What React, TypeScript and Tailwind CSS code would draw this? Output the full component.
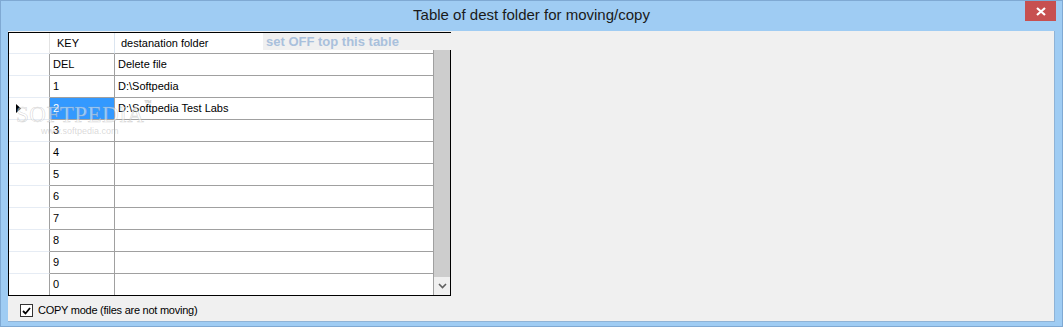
import React from "react";

const rows = ["DEL", "1", "2", "3", "4", "5", "6", "7", "8", "9", "0"];
const dest: Record<string, string> = { DEL: "Delete file", "1": "D:\\Softpedia", "2": "D:\\Softpedia Test Labs" };

export default function App() {
  return (
    <div className="w-[1063px] h-[327px] bg-[#9fccf3] border border-[#7fa9d3] flex flex-col relative overflow-hidden" style={{ fontFamily: '"Liberation Sans", Arial, sans-serif' }}>
      {/* title bar */}
      <div className="h-[30px] shrink-0 flex items-center justify-center relative">
        <span className="text-[15px] text-[#1a1a1a] pb-[1px]">Table of dest folder for moving/copy</span>
        <div className="absolute right-[6px] top-0 w-[31px] h-[20px] bg-[#c75050] flex items-center justify-center">
          <svg width="10" height="9" viewBox="0 0 10 9">
            <path d="M1 1 L9 8 M9 1 L1 8" stroke="#ffffff" strokeWidth="2.2" />
          </svg>
        </div>
      </div>
      {/* client */}
      <div className="ml-[7px] w-[1047px] h-[291px] bg-[#f0f0f0] border-r border-b border-[#8fb3d6] relative">
        {/* grid */}
        <div className="mt-[1px] w-[443px] h-[264px] border border-black bg-[#ffffff] flex relative">
          <div className="w-[425px] flex flex-col text-[11px] text-black">
            {/* header */}
            <div className="h-[21px] flex shrink-0">
              <div className="w-[41px] border-r border-[#e3e3e3] border-b border-b-[#e6ecf4]" />
              <div className="w-[65px] border-r border-[#dbe5f0] border-b border-b-[#a0a0a0] flex items-center pl-[7px]">KEY</div>
              <div className="w-[319px] border-r border-[#a0a0a0] border-b border-b-[#a0a0a0] flex items-center pl-[6px]">destanation folder</div>
            </div>
            {rows.map((k, i) => {
              const last = i === rows.length - 1;
              const sel = k === "2";
              return (
                <div key={k} className={`flex shrink-0 ${last ? "h-[21px]" : "h-[22px]"}`}>
                  <div className={`w-[41px] border-r border-[#a0a0a0] flex items-center pl-[7px] ${last ? "" : "border-b border-b-[#e6ecf4]"}`}>
                    {sel && (
                      <svg width="5" height="9" viewBox="0 0 5 9">
                        <path d="M0 0 L5 4.5 L0 9 Z" fill="#000" />
                      </svg>
                    )}
                  </div>
                  <div className={`w-[65px] border-r border-[#a0a0a0] flex items-center pl-[3px] ${last ? "" : "border-b border-b-[#a0a0a0]"} ${sel ? "bg-[#3399ff] text-white" : ""}`}>{k}</div>
                  <div className={`w-[319px] border-r border-[#a0a0a0] flex items-center pl-[3px] ${last ? "" : "border-b border-b-[#a0a0a0]"}`}>{dest[k] ?? ""}</div>
                </div>
              );
            })}
          </div>
          {/* scrollbar */}
          <div className="w-[16px] flex flex-col bg-[#f0f0f0]">
            <div className="h-[17px] shrink-0" />
            <div className="flex-1 bg-[#cdcdcd]" />
            <div className="h-[18px] shrink-0 flex items-center justify-center">
              <svg width="9" height="6" viewBox="0 0 9 6">
                <path d="M1 1 L4.5 4.5 L8 1" stroke="#606060" strokeWidth="1.6" fill="none" />
              </svg>
            </div>
          </div>
          {/* watermark overlay */}
          <div className="absolute left-[7px] top-[65px] text-[23px] tracking-[0.5px] text-[rgba(255,255,255,0.5)] pointer-events-none" style={{ fontFamily: '"Liberation Serif", serif', WebkitTextStroke: "0.6px rgba(160,160,160,0.45)" }}>
            SOFTPEDIA<span className="text-[7px] align-top">™</span>
          </div>
          <div className="absolute left-[32px] top-[92px] text-[9px] text-[rgba(170,170,170,0.45)] pointer-events-none">www.softpedia.com</div>
        </div>
        {/* overlay label */}
        <div className="absolute left-[255px] top-[2px] w-[188px] h-[17px] bg-[#f0f0f0] flex items-center pl-[3px]">
          <span className="text-[13px] font-bold text-[#a9c0dc]">set OFF top this table</span>
        </div>
        {/* checkbox row */}
        <div className="flex items-center pl-[12px] mt-[8px] h-[13px]">
          <div className="w-[13px] h-[13px] border border-[#333333] bg-white flex items-center justify-center">
            <svg width="9" height="8" viewBox="0 0 9 8">
              <path d="M1 4 L3.5 6.5 L8 1" stroke="#000" strokeWidth="1.8" fill="none" />
            </svg>
          </div>
          <span className="ml-[5px] text-[11px] tracking-[-0.25px] text-black">COPY mode (files are not moving)</span>
        </div>
      </div>
    </div>
  );
}
